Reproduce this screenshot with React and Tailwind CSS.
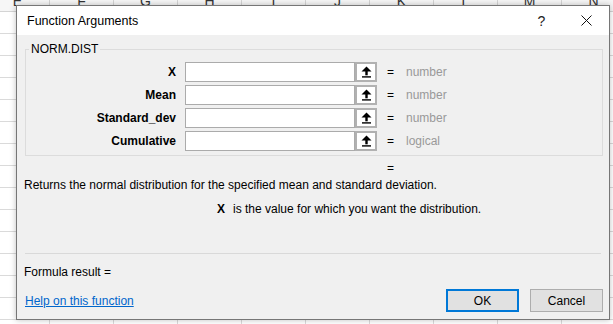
import React from 'react';

const columns = ['E', 'F', 'G', 'H', 'I', 'J', 'K', 'L', 'M', 'N'];
const rows = Array.from({ length: 15 });

const args = [
    { name: 'X', type: 'number' },
    { name: 'Mean', type: 'number' },
    { name: 'Standard_dev', type: 'number' },
    { name: 'Cumulative', type: 'logical' },
];

function CollapseIcon() {
    return (
        <svg width="11" height="12" viewBox="0 0 11 12" className="block">
            <polygon points="5.5,0.5 0.5,5.5 10.5,5.5" fill="#000" />
            <rect x="4.3" y="5" width="2.4" height="4.3" fill="#000" />
            <rect x="1" y="10.2" width="9" height="1.4" fill="#000" />
        </svg>
    );
}

function ArgRow({ name, type }) {
    return (
        <div className="flex items-center h-[20px]">
            <div className="w-[150px] text-right font-bold text-black">{name}</div>
            <div className="ml-[9px] w-[170px] h-[20px] bg-white border border-[#ababab]" />
            <div className="w-[22px] h-[20px] bg-white border-2 border-[#b1b1b1] flex items-center justify-center">
                <CollapseIcon />
            </div>
            <div className="ml-[10px] text-black">=</div>
            <div className="ml-[12px] text-[#999999]">{type}</div>
        </div>
    );
}

export default function App() {
    return (
        <div className="relative w-[613px] h-[324px] overflow-hidden bg-white font-['Liberation_Sans',Arial,sans-serif] text-[12px] leading-[14px]">

            {/* Spreadsheet behind the dialog */}
            <div className="flex flex-col -mt-[9px] -ml-[14px]">
                <div className="flex h-[21px] bg-[#f6f6f6] border-b border-[#d4d4d4]">
                    {columns.map((c) => (
                        <div key={c} className="w-[64px] shrink-0 border-r border-[#d4d4d4] flex items-center justify-center text-[14px] text-[#333]">
                            {c}
                        </div>
                    ))}
                </div>
                {rows.map((_, i) => (
                    <div key={i} className="flex h-[22px] border-b border-[#dadada]">
                        {columns.map((c) => (
                            <div key={c} className="w-[64px] shrink-0 border-r border-[#dadada]" />
                        ))}
                    </div>
                ))}
            </div>

            {/* Function Arguments dialog */}
            <div className="absolute left-[16px] top-[5px] w-[594px] h-[315px] flex flex-col border border-[#767676] bg-[#f0f0f0] shadow-[0_0_6px_rgba(0,0,0,0.25)]">

                {/* Title bar */}
                <div className="h-[29px] bg-white flex items-center">
                    <div className="pl-[10px] flex-1 text-[12.5px] text-black">Function Arguments</div>
                    <div className="w-[45px] h-full flex items-center justify-center text-[14px] text-[#222]">?</div>
                    <div className="w-[45px] h-full flex items-center justify-center">
                        <svg width="11" height="11" viewBox="0 0 11 11">
                            <path d="M0.5 0.5 L10.5 10.5 M10.5 0.5 L0.5 10.5" stroke="#111" strokeWidth="1" />
                        </svg>
                    </div>
                </div>

                {/* Body */}
                <div className="flex-1 flex flex-col">
                    <fieldset className="mt-[7px] ml-[8px] mr-[6px] border border-[#dcdcdc] pb-[4px]">
                        <legend className="ml-[3px] px-[2px] text-black">NORM.DIST</legend>
                        <div className="pt-[6px] flex flex-col gap-[3px]">
                            {args.map((a) => (
                                <ArgRow key={a.name} name={a.name} type={a.type} />
                            ))}
                        </div>
                    </fieldset>

                    <div className="mt-[5px] pl-[370px] text-black">=</div>

                    <div className="mt-[3px] pl-[7px] text-black">
                        Returns the normal distribution for the specified mean and standard deviation.
                    </div>

                    <div className="mt-[10px] pl-[200px] flex text-black">
                        <span className="font-bold">X</span>
                        <span className="ml-[8px]">is the value for which you want the distribution.</span>
                    </div>

                    <div className="mt-[37px] mx-[8px] h-px bg-[#d9d9d9]" />

                    <div className="mt-[11px] pl-[7px] text-black">Formula result =</div>

                    <div className="mt-[10px] flex items-center pl-[8px] pr-[6px]">
                        <a href="#" className="flex-1 text-[#0066cc] underline">Help on this function</a>
                        <button className="w-[73px] h-[23px] bg-[#e1e1e1] border-2 border-[#0078d7] text-black">OK</button>
                        <button className="ml-[11px] w-[73px] h-[23px] bg-[#e1e1e1] border border-[#adadad] text-black">Cancel</button>
                    </div>
                </div>
            </div>
        </div>
    );
}
